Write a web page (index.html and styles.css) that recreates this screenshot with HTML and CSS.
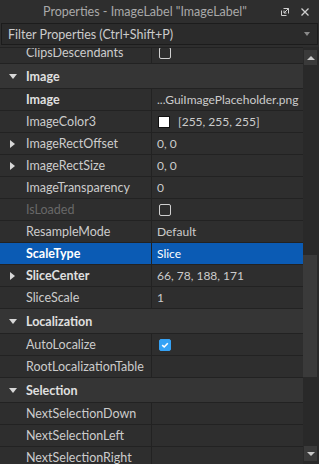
FILE: index.html
```html
<!DOCTYPE html>
<html lang="en">
<head>
  <meta charset="UTF-8" />
  <title>Properties</title>
  <link rel="stylesheet" href="styles.css">
</head>
<body>
  <div class="window">
    <div class="titlebar">
      <span class="title">Properties - ImageLabel "ImageLabel"</span>
      <span class="tools">
        <svg class="ico" width="10" height="10" viewBox="0 0 10 10">
          <path d="M1.5 3.5 V8.5 H6.5" fill="none" stroke="#cfcfcf" stroke-width="1"/>
          <path d="M3.5 1.5 H8.5 V6.5" fill="none" stroke="#cfcfcf" stroke-width="1"/>
          <path d="M8.5 1.5 L4 6 M4 3.5 V6 H6.5" fill="none" stroke="#cfcfcf" stroke-width="1"/>
        </svg>
        <svg class="ico" width="10" height="10" viewBox="0 0 10 10">
          <path d="M1.5 1.5 L8.5 8.5 M8.5 1.5 L1.5 8.5" stroke="#cfcfcf" stroke-width="1.3"/>
        </svg>
      </span>
    </div>

    <div class="filter">
      <span>Filter Properties (Ctrl+Shift+P)</span>
      <span class="caret"></span>
    </div>

    <div class="panel">
      <div class="list">
        <div class="row first">
          <div class="name">ClipsDescendants</div>
          <div class="value"><span class="check"></span></div>
        </div>

        <div class="group"><span class="arrow down"></span>Image</div>
        <div class="row">
          <div class="name bold">Image</div>
          <div class="value">...GuiImagePlaceholder.png</div>
        </div>
        <div class="row">
          <div class="name">ImageColor3</div>
          <div class="value"><span class="swatch"></span>[255, 255, 255]</div>
        </div>
        <div class="row">
          <div class="name"><span class="arrow right"></span>ImageRectOffset</div>
          <div class="value">0, 0</div>
        </div>
        <div class="row">
          <div class="name"><span class="arrow right"></span>ImageRectSize</div>
          <div class="value">0, 0</div>
        </div>
        <div class="row">
          <div class="name">ImageTransparency</div>
          <div class="value">0</div>
        </div>
        <div class="row">
          <div class="name muted">IsLoaded</div>
          <div class="value"><span class="check"></span></div>
        </div>
        <div class="row">
          <div class="name">ResampleMode</div>
          <div class="value">Default</div>
        </div>
        <div class="row selected">
          <div class="name bold">ScaleType</div>
          <div class="value">Slice</div>
        </div>
        <div class="row">
          <div class="name bold"><span class="arrow right"></span>SliceCenter</div>
          <div class="value">66, 78, 188, 171</div>
        </div>
        <div class="row">
          <div class="name">SliceScale</div>
          <div class="value">1</div>
        </div>

        <div class="group"><span class="arrow down"></span>Localization</div>
        <div class="row">
          <div class="name">AutoLocalize</div>
          <div class="value">
            <span class="check on">
              <svg width="10" height="10" viewBox="0 0 10 10"><path d="M2.2 5.2 L4.2 7 L7.8 3.2" fill="none" stroke="#fff" stroke-width="1.6"/></svg>
            </span>
          </div>
        </div>
        <div class="row">
          <div class="name">RootLocalizationTable</div>
          <div class="value"></div>
        </div>

        <div class="group"><span class="arrow down"></span>Selection</div>
        <div class="row">
          <div class="name">NextSelectionDown</div>
          <div class="value"></div>
        </div>
        <div class="row">
          <div class="name">NextSelectionLeft</div>
          <div class="value"></div>
        </div>
        <div class="row">
          <div class="name">NextSelectionRight</div>
          <div class="value"></div>
        </div>
      </div>

      <div class="scrollbar">
        <div class="btn"><span class="tri up"></span></div>
        <div class="track">
          <div class="thumb"></div>
        </div>
        <div class="btn"><span class="tri dn"></span></div>
      </div>
    </div>
  </div>
</body>
</html>
```

FILE: styles.css
```css
body {
  margin: 0;
  padding: 0;
  background-color: #2e2e2e;
  font-family: 'Lato', 'Open Sans', sans-serif;
  font-size: 12px;
  color: #cccccc;
}

.window {
  width: 319px;
  height: 464px;
  overflow: hidden;
  display: flex;
  flex-direction: column;
}

.titlebar {
  height: 23px;
  display: flex;
  align-items: center;
  background-color: #2e2e2e;
  color: #a9a9a9;
  font-size: 12.5px;
}

.title {
  margin-left: 43px;
}

.tools {
  margin-left: auto;
  margin-right: 9px;
  display: flex;
  gap: 10px;
}

.filter {
  height: 20px;
  margin: 0 1px;
  border: 1px solid #1c1c1c;
  background-color: #2b2b2b;
  display: flex;
  align-items: center;
  padding-left: 6px;
  font-size: 12.5px;
  color: #cccccc;
}

.caret {
  margin-left: auto;
  margin-right: 7px;
  width: 0;
  height: 0;
  border-left: 3.5px solid transparent;
  border-right: 3.5px solid transparent;
  border-top: 4px solid #8a8a8a;
}

.panel {
  flex: 1;
  display: flex;
  margin-top: 2px;
  overflow: hidden;
}

.list {
  width: 303px;
  overflow: hidden;
  border-top: 1px solid #222;
}

.row {
  display: grid;
  grid-template-columns: 152px 1fr;
  height: 22px;
  box-sizing: border-box;
  border-bottom: 1px solid #222222;
  background-color: #2e2e2e;
}

.row.first {
  margin-top: -6px;
}

.name {
  display: flex;
  align-items: center;
  padding-left: 26px;
  border-right: 1px solid #222222;
  position: relative;
  white-space: nowrap;
  overflow: hidden;
  font-size: 12.5px;
}

.value {
  display: flex;
  align-items: center;
  padding-left: 5px;
  white-space: nowrap;
  overflow: hidden;
  color: #cccccc;
}

.bold {
  font-weight: bold;
  color: #e0e0e0;
}

.muted {
  color: #686868;
}

.row.selected {
  background-color: #0b5bb4;
}

.row.selected .name,
.row.selected .value {
  color: #ffffff;
}

.group {
  height: 25px;
  box-sizing: border-box;
  border-bottom: 1px solid #222222;
  background-color: #353535;
  display: flex;
  align-items: center;
  padding-left: 26px;
  font-weight: bold;
  font-size: 12.5px;
  color: #e0e0e0;
  position: relative;
}

.arrow {
  position: absolute;
  left: 9px;
  top: 50%;
  width: 0;
  height: 0;
}

.arrow.down {
  margin-top: -2px;
  border-left: 4px solid transparent;
  border-right: 4px solid transparent;
  border-top: 5px solid #d8d8d8;
}

.arrow.right {
  margin-top: -4px;
  left: 10px;
  border-top: 4px solid transparent;
  border-bottom: 4px solid transparent;
  border-left: 5px solid #d8d8d8;
}

.check {
  width: 10px;
  height: 10px;
  border: 1px solid #d0d0d0;
  border-radius: 2px;
  margin-left: 2px;
  display: flex;
  align-items: center;
  justify-content: center;
}

.check.on {
  border-color: #35a2f5;
  background-color: #35a2f5;
}

.swatch {
  width: 10px;
  height: 10px;
  background-color: #ffffff;
  border: 1px solid #111;
  margin-left: 1px;
  margin-right: 8px;
}

.scrollbar {
  width: 16px;
  display: flex;
  flex-direction: column;
  background-color: #292929;
}

.btn {
  height: 15px;
  margin: 3px 2px 0 1px;
  background-color: #3a3a3a;
  display: flex;
  align-items: center;
  justify-content: center;
}

.btn:last-child {
  margin: 0 2px 3px 1px;
}

.track {
  flex: 1;
  position: relative;
}

.thumb {
  position: absolute;
  left: 0;
  right: 2px;
  top: 190px;
  height: 122px;
  background-color: #3a3a3a;
}

.tri {
  width: 0;
  height: 0;
  border-left: 4px solid transparent;
  border-right: 4px solid transparent;
}

.tri.up {
  border-bottom: 4px solid #c8c8c8;
}

.tri.dn {
  border-top: 4px solid #c8c8c8;
}
```
